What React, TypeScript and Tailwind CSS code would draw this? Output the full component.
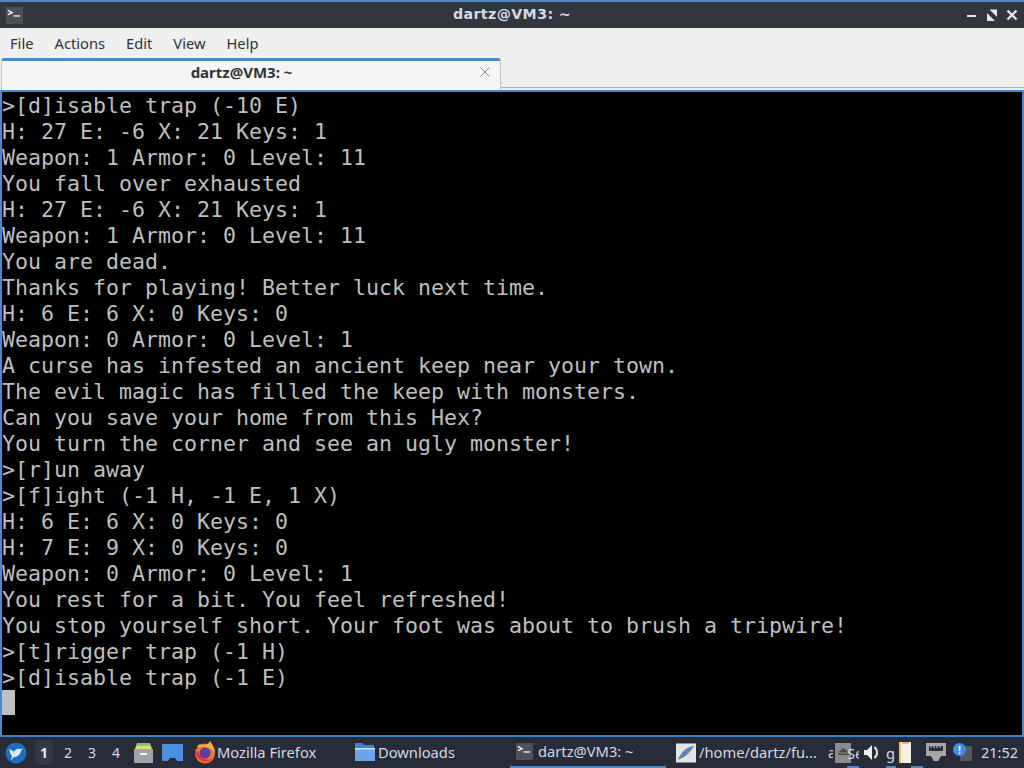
import React from "react";

const lines = [
  ">[d]isable trap (-10 E)",
  "H: 27 E: -6 X: 21 Keys: 1",
  "Weapon: 1 Armor: 0 Level: 11",
  "You fall over exhausted",
  "H: 27 E: -6 X: 21 Keys: 1",
  "Weapon: 1 Armor: 0 Level: 11",
  "You are dead.",
  "Thanks for playing! Better luck next time.",
  "H: 6 E: 6 X: 0 Keys: 0",
  "Weapon: 0 Armor: 0 Level: 1",
  "A curse has infested an ancient keep near your town.",
  "The evil magic has filled the keep with monsters.",
  "Can you save your home from this Hex?",
  "You turn the corner and see an ugly monster!",
  ">[r]un away",
  ">[f]ight (-1 H, -1 E, 1 X)",
  "H: 6 E: 6 X: 0 Keys: 0",
  "H: 7 E: 9 X: 0 Keys: 0",
  "Weapon: 0 Armor: 0 Level: 1",
  "You rest for a bit. You feel refreshed!",
  "You stop yourself short. Your foot was about to brush a tripwire!",
  ">[t]rigger trap (-1 H)",
  ">[d]isable trap (-1 E)",
];

function TermIcon({ size = 18 }: { size?: number }) {
  return (
    <svg width={size} height={size} viewBox="0 0 18 18" className="shrink-0">
      <rect width="18" height="18" fill="#4e5053" />
      <path d="M2 3.5 L6.5 6 L2 8" fill="none" stroke="#f2f2f2" strokeWidth="1.5" />
      <path d="M8 9.5 H15" stroke="#e8e8e8" strokeWidth="1.5" />
    </svg>
  );
}

export default function App() {
  return (
    <div className="w-[1024px] h-[768px] overflow-hidden flex flex-col bg-black font-['Noto_Sans','Open_Sans',sans-serif]">
      <div className="h-[2px] bg-[#4a88cf]" />
      <div className="h-[26px] bg-[#33363d] flex items-center relative">
        <div className="w-[60px] pl-[6px] pt-[1px] shrink-0">
          <TermIcon size={17} />
        </div>
        <div className="flex-1 text-center text-[14.2px] font-bold tracking-[0.4px] text-[#d3dae3] font-['DejaVu_Sans',sans-serif]">
          dartz@VM3: ~
        </div>
        <div className="w-[60px] shrink-0 flex items-center justify-end gap-[8px] pr-[6px]">
          <svg width="12" height="11" viewBox="0 0 12 11">
            <path d="M1 6 H10" stroke="#e4e6e8" strokeWidth="2" />
          </svg>
          <svg width="12" height="12" viewBox="0 0 12 12">
            <path d="M1 4 V12 H9 Z M3.5 0.5 H11 V8 Z" fill="#e4e6e8" />
          </svg>
          <svg width="12" height="12" viewBox="0 0 12 12">
            <path d="M1.5 1.5 L10.5 10.5 M10.5 1.5 L1.5 10.5" stroke="#e4e6e8" strokeWidth="2.4" />
          </svg>
        </div>
      </div>
      <div className="h-[30px] bg-[#efefef] flex items-center pl-[10px] gap-[21px] text-[14.7px] text-[#2e3436] pt-[1px]">
        <span>File</span>
        <span>Actions</span>
        <span>Edit</span>
        <span>View</span>
        <span>Help</span>
      </div>
      <div className="h-[32px] bg-[#efefef] flex items-stretch relative">
        <div className="w-[500px] ml-[1px] rounded-t-[3px] border-t-[3px] border-x border-t-[#4a88cf] border-x-[#c4c4c4] bg-[#f5f5f5] flex items-center pb-[7px] relative">
          <div className="flex-1 text-center text-[15px] font-bold text-[#2e3436] pr-[19px]">dartz@VM3: ~</div>
          <svg width="10" height="10" viewBox="0 0 10 10" className="absolute right-[10px] top-[6px]">
            <path d="M0.5 0.5 L9.5 9.5 M9.5 0.5 L0.5 9.5" stroke="#8a8a8a" strokeWidth="1" />
          </svg>
        </div>
        <div className="flex-1 border-b border-[#b4b4b4] mb-[2px]" />
      </div>
      <div className="flex-1 min-h-0 border-t-2 border-x-2 border-[#4a88cf] bg-black overflow-hidden pt-[1px]">
        <div className="font-['DejaVu_Sans_Mono',monospace] text-[21.6px] leading-[26px] text-[#bfbfbf] whitespace-pre">
          {lines.map((l, i) => (
            <div key={i} className="h-[26px]">{l}</div>
          ))}
          <div className="w-[13px] h-[25px] -mt-[1px] bg-[#c0c0c0]" />
        </div>
      </div>
      <div className="h-[2px] bg-[#3f7fc4]" />
      <div className="h-[31px] bg-[#282b38] flex items-center text-[14.7px] text-[#d3dae3] relative">
        <svg width="22" height="22" viewBox="0 0 22 22" className="ml-[5px] mt-[1px] shrink-0">
          <circle cx="11" cy="11" r="10.5" fill="#1b6fc2" />
          <path d="M4 7 C7 9 8 8 9 10 C10 7 13 6 15 7 L18 6.5 L16 9 C15 13 12 15 9 15 L6 18 L7 14 C5 12 5 10 4 7 Z" fill="#dbe9f5" />
        </svg>
        <div className="ml-[8px] w-[18px] h-[25px] bg-[#343746] rounded-[2px] flex items-center justify-center font-bold text-[14px] text-[#e6e9ee]">1</div>
        <div className="ml-[6px] w-[18px] text-center text-[14px]">2</div>
        <div className="ml-[6px] w-[18px] text-center text-[14px]">3</div>
        <div className="ml-[6px] w-[18px] text-center text-[14px]">4</div>
        <svg width="21" height="20" viewBox="0 0 21 20" className="ml-[8px] shrink-0">
          <path d="M4 0 H17 L18 3 H3 Z" fill="#7dc383" />
          <path d="M3 3 H18 L19 6 H2 Z" fill="#e8d574" />
          <path d="M1 6 H20 V20 H1 Z" fill="#a2a2a2" />
          <rect x="7" y="10" width="7" height="2" fill="#f2f2f2" />
        </svg>
        <svg width="21" height="17" viewBox="0 0 21 17" className="ml-[8px] shrink-0">
          <path d="M0 0 H21 V17 H15 L13 14 H8 L6 17 H0 Z" fill="#4a8fe0" />
        </svg>
        <svg width="23" height="23" viewBox="0 0 23 23" className="ml-[11px] shrink-0">
          <circle cx="11" cy="12.5" r="10" fill="#f0782a" />
          <path d="M3 6 C5 1 9 5 11 4 C14 3 15 2 16 0 C18 3 21 7 21 12 C17 5 8 5 3 6 Z" fill="#fbb03b" />
          <circle cx="11" cy="12" r="5.5" fill="#5c3ea8" />
          <path d="M1 11 C3 20 13 24 19 17 C14 20 6 19 4 10 Z" fill="#e8303c" />
        </svg>
        <span className="w-[138px] shrink-0">Mozilla Firefox</span>
        <svg width="20" height="20" viewBox="0 0 20 20" className="shrink-0 mb-[1px]">
          <path d="M0 1 H7 L9 3 H19 V19 H0 Z" fill="#3f7fd6" />
          <path d="M0 6 H20 V19 H0 Z" fill="#6aa5ea" />
          <rect x="0" y="6" width="20" height="1.5" fill="#cfe2f7" />
        </svg>
        <span className="ml-[3px] w-[76px] shrink-0">Downloads</span>
        <div className="ml-[56px] w-[156px] h-full shrink-0 flex items-center border-b-2 border-[#4a88cf] pl-[6px] pt-[1px] pb-[2px]">
          <TermIcon size={17} />
          <span className="ml-[5px]">dartz@VM3: ~</span>
        </div>
        <svg width="20" height="20" viewBox="0 0 21 20" className="ml-[10px] shrink-0">
          <rect width="21" height="20" fill="#e4e4e4" />
          <path d="M2 17 C5 10 10 4 19 2 C16 8 11 14 2 17 Z" fill="#5b83b8" />
        </svg>
        <span className="ml-[3px] w-[122px] shrink-0 whitespace-nowrap">/home/dartz/fu...</span>
        <span className="ml-[7px] w-[5px] overflow-hidden text-[14px] shrink-0">a</span>
        <div className="w-[16px] h-[20px] bg-[#8b8b8b] shrink-0 ml-[2px] flex items-start justify-center pt-[5px]">
          <svg width="11" height="7" viewBox="0 0 11 7"><path d="M5.5 0 L11 4.5 H0 Z M0 5.5 H11 V7 H0 Z" fill="#4a4a4a" /></svg>
        </div>
        <span className="w-[12px] overflow-hidden ml-[-4px] shrink-0 relative border-b-2 border-[#4a88cf] h-[27px] mt-[4px] pt-[1px]">Se</span>
        <svg width="16" height="17" viewBox="0 0 16 17" className="ml-[5px] shrink-0">
          <path d="M0 6 H3 L8 1 V16 L3 11 H0 Z" fill="#f0f0f0" />
          <path d="M10.5 3 C14 6 14 11 10.5 14" fill="none" stroke="#f0f0f0" strokeWidth="2" />
        </svg>
        <span className="ml-[6px] w-[10px] overflow-hidden shrink-0 border-b-2 border-[#4a88cf] h-[27px] mt-[4px] pt-[1px]">g</span>
        <svg width="12" height="21" viewBox="0 0 12 21" className="ml-[3px] shrink-0">
          <rect width="12" height="21" y="0" fill="#f4f2e6" />
          <rect x="0" y="0" width="2" height="21" fill="#e8c860" />
          <rect x="3" y="0" width="7" height="2" fill="#c9c2a0" />
        </svg>
        <div className="w-[12px] h-[27px] mt-[4px] border-b-2 border-[#4a88cf] shrink-0" />
        <svg width="20" height="19" viewBox="0 0 20 19" className="ml-[3px] shrink-0">
          <path d="M0 0 H20 V13 H15 L12 18 H8 L5 13 H0 Z" fill="#a6a6a6" />
          <path d="M3 3 H17 V8 H3 Z" fill="#2a2c36" />
          <path d="M5 3 V5 M8 3 V5 M11 3 V5 M14 3 V5" stroke="#cfcfcf" strokeWidth="1" />
        </svg>
        <div className="ml-[7px] relative w-[19px] h-[19px] shrink-0">
          <div className="absolute right-0 top-[3px] w-[12px] h-[15px] bg-[#55585c]" />
          <div className="absolute left-0 top-0 w-[13px] h-[13px] rounded-full bg-[#3f8fe8] flex items-center justify-center text-[10px] font-bold text-white leading-none">!</div>
        </div>
        <span className="ml-[9px] text-[#d3dae3] text-[14.5px]">21:52</span>
      </div>
    </div>
  );
}
